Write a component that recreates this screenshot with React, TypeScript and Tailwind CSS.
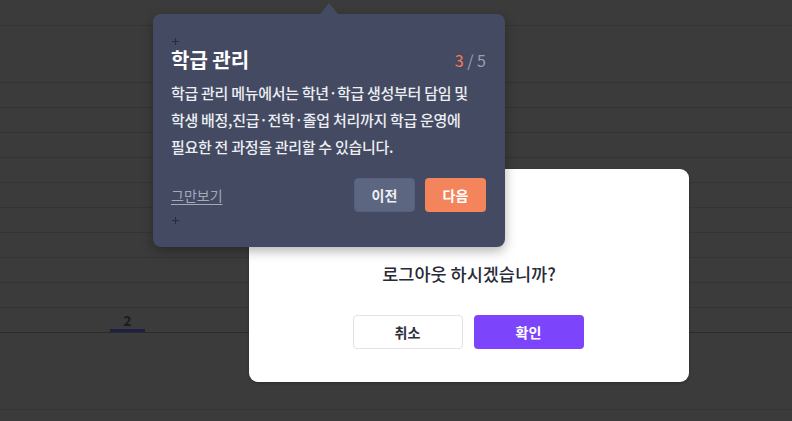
import React from "react";

function Cross() {
  return (
    <div className="relative ml-[1px] w-[7px] h-[7px]">
      <div className="absolute left-0 top-[3px] w-[7px] h-[1px] bg-[#262c3e]" />
      <div className="absolute left-[3px] top-0 w-[1px] h-[7px] bg-[#262c3e]" />
    </div>
  );
}

export default function App() {
  const thinRows = Array.from({ length: 9 });
  return (
    <div className="relative w-[792px] h-[421px] overflow-hidden bg-[#3a3b3a] font-['Noto_Sans_CJK_KR','Noto_Sans',sans-serif]">
      {/* background table rows (dimmed by overlay) */}
      <div className="flex flex-col">
        <div className="h-[26px] border-b border-[#333433]" />
        <div className="h-[57px] border-b border-[#333433]" />
        {thinRows.map((_, i) => (
          <div key={i} className="h-[25px] border-b border-[#333433]" />
        ))}
        <div className="h-[25px] border-b border-[#2a2b2a] flex items-end">
          <div className="ml-[110px] w-[35px] flex flex-col items-center">
            <span className="text-[14px] font-bold leading-[18px] text-[#1b1c22]">2</span>
            <div className="h-[3px] w-full bg-[#1d1f45]" />
          </div>
        </div>
        <div className="h-[77px] border-b border-[#333433]" />
      </div>

      {/* logout modal */}
      <div className="absolute left-[249px] top-[169px] w-[440px] h-[213px] rounded-[9px] bg-white shadow-[0_1px_3px_rgba(0,0,0,0.25)] flex flex-col items-center pt-[92px]">
        <p className="text-[17.5px] leading-[26px] font-medium text-[#262a36]">로그아웃 하시겠습니까?</p>
        <div className="mt-[28px] flex gap-[11px] -translate-x-[1px]">
          <button className="w-[110px] h-[34px] rounded-[4px] border border-[#e3e3e6] bg-white text-[14px] font-bold text-[#2d3039]">
            취소
          </button>
          <button className="w-[110px] h-[34px] rounded-[4px] bg-[#7d45fb] text-[14px] font-bold text-white">
            확인
          </button>
        </div>
      </div>

      {/* guide tooltip */}
      <div className="absolute left-[153px] top-[14px] w-[352px] h-[233px] rounded-[8px] bg-[#434a61] shadow-[0_4px_12px_rgba(0,0,0,0.3)] pl-[18px] pr-[19px] flex flex-col">
        <div className="absolute left-[167px] -top-[11px] w-0 h-0 border-l-[9px] border-r-[9px] border-b-[11px] border-l-transparent border-r-transparent border-b-[#434a61]" />
        <div className="mt-[22px] h-[10px] flex items-center">
          <Cross />
        </div>
        <div className="flex items-center justify-between h-[28px]">
          <h2 className="text-[20px] font-bold leading-[24px] text-white">학급 관리</h2>
          <span className="text-[16px] leading-[20px] text-[#9aa0b0]">
            <span className="text-[#f47c56]">3</span> / 5
          </span>
        </div>
        <p className="mt-[5px] text-[15px] font-medium leading-[27px] tracking-[-0.3px] text-[#eceef3]">
          학급 관리 메뉴에서는 학년·학급 생성부터 담임 및
          <br />
          학생 배정,진급·전학·졸업 처리까지 학급 운영에
          <br />
          필요한 전 과정을 관리할 수 있습니다.
        </p>
        <div className="mt-[18px] flex items-center justify-between">
          <span className="text-[14px] leading-[18px] text-[#a4a9b8] underline underline-offset-[3px]">그만보기</span>
          <div className="flex gap-[10px]">
            <button className="w-[61px] h-[34px] rounded-[4px] border border-[#56607a] bg-[#5d6680] text-[14px] font-bold text-[#eef0f4]">
              이전
            </button>
            <button className="w-[61px] h-[34px] rounded-[4px] bg-[#f4845b] text-[14px] font-bold text-white">
              다음
            </button>
          </div>
        </div>
        <div className="mt-[3px] h-[10px] flex items-center">
          <Cross />
        </div>
      </div>
    </div>
  );
}
